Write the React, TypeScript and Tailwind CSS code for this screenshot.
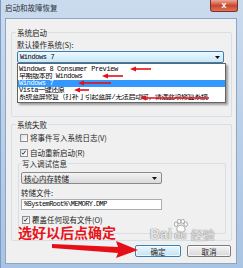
import React from 'react'

const sans = "font-['Noto_Sans_CJK_SC','Liberation_Sans',sans-serif]"
const mono = "font-['Liberation_Mono','Noto_Sans_CJK_SC',monospace]"

const bootItems = [
  'Windows 8 Consumer Preview',
  '早期版本的 Windows',
  'Windows 7',
  'Vista一键还原',
  '系统蓝屏修复（打补丁引起蓝屏/无法启动时，请选此项修复系统',
]

// red annotation arrows pointing left: [tail x, head x, y]
const marks: [number, number, number][] = [
  [150, 129, 69],
  [122, 101, 76],
  [110, 77, 83],
  [88, 73, 90],
  [208, 139, 98],
]

function Check({ checked }: { checked?: boolean }) {
  return (
    <span className="relative flex h-[8px] w-[8px] shrink-0 items-center justify-center border border-[#8f8f8f] bg-gradient-to-br from-[#dedede] to-white">
      {checked && (
        <svg viewBox="0 0 8 8" className="absolute left-0 top-0 h-[6px] w-[6px]">
          <path d="M1.2 3.8 L2.9 5.6 L6 1.2" fill="none" stroke="#1f3a70" strokeWidth="1.3" />
        </svg>
      )}
    </span>
  )
}

function Caret() {
  return (
    <svg viewBox="0 0 5 3" className="h-[3px] w-[5px]">
      <path d="M0 0 H5 L2.5 3 Z" fill="#111" />
    </svg>
  )
}

function GroupTitle({ children }: { children: React.ReactNode }) {
  return <div className="-mt-[5px] -ml-[1px] w-fit bg-[#f0f0f0] px-[1px] text-[7.5px] leading-[9px]">{children}</div>
}

function Watermark() {
  return (
    <div className="pointer-events-none absolute left-[144px] top-[200px] flex items-end text-white/80 [text-shadow:0_0_1px_#7a7a7a,0_0_1px_#7a7a7a]">
      <span className="font-['Liberation_Sans',sans-serif] text-[14px] font-bold leading-[14px]">Bai</span>
      <div className="flex flex-col items-center">
        <svg viewBox="0 0 18 16" className="h-[14px] w-[17px]">
          <g fill="rgba(255,255,255,0.85)" stroke="#8a8a8a" strokeWidth="0.8">
            <ellipse cx="4" cy="6" rx="2" ry="2.6" />
            <ellipse cx="7.5" cy="2.8" rx="2" ry="2.5" />
            <ellipse cx="11.5" cy="2.8" rx="2" ry="2.5" />
            <ellipse cx="15" cy="6" rx="2" ry="2.6" />
            <path d="M9.5 7 C6 7 4 11 5 13.5 C6 15.5 13 15.5 14 13.5 C15 11 13 7 9.5 7 Z" />
          </g>
        </svg>
        <span className="-mt-[2px] font-['Liberation_Sans',sans-serif] text-[10px] font-bold leading-[10px]">du</span>
      </div>
      <span className="ml-[2px] text-[12px] leading-[13px]">经验</span>
    </div>
  )
}

export default function App() {
  return (
    <div
      className={`relative flex h-[268px] w-[243px] flex-col overflow-hidden border-l border-[#7c9cc8] bg-gradient-to-b from-[#cbdbee] to-[#a9c3e2] text-[#1e1e1e] ${sans}`}
    >
      {/* title bar */}
      <div className="flex h-[18px] shrink-0 items-start justify-between">
        <span className="pl-[4px] pt-[3px] text-[7.5px] leading-[9px] text-[#2b3440]">启动和故障恢复</span>
        <div className="mr-[5px] flex h-[12px] w-[28px] items-center justify-center rounded-b-[3px] border border-t-0 border-[#7b3329] bg-gradient-to-b from-[#eaa796] via-[#c9462f] to-[#dc7358] font-['Liberation_Sans',sans-serif] text-[9px] font-bold leading-none text-white">
          x
        </div>
      </div>

      {/* dialog body */}
      <div className="relative mb-[4px] ml-[4px] mr-[6px] flex-1 border border-[#8ea6c4] bg-[#f0f0f0]">
        {/* 系统启动 */}
        <div className="relative ml-[5px] mt-[13px] h-[85px] w-[221px] rounded-[2px] border border-[#d5dfe5] pl-[5px]">
          <GroupTitle>系统启动</GroupTitle>
          <div className="mt-[3px] text-[7.5px] leading-[9px]">默认操作系统(S):</div>
          <div className="mt-[2px] flex h-[12px] w-[207px] items-center justify-between rounded-[2px] border border-[#3c7fb1] bg-gradient-to-b from-[#eef8fe] to-[#c6e8fb] pl-[2px] pr-[3px]">
            <span className={`${mono} text-[7px] leading-[9px] tracking-[-0.4px] text-black`}>Windows 7</span>
            <Caret />
          </div>
          <div className="absolute left-[5px] top-[30px] z-10 h-[40px] w-[209px] overflow-hidden border border-[#646464] bg-white pt-[2px] shadow-[2px_2px_2px_rgba(0,0,0,0.35)]">
            {bootItems.map((item, i) => (
              <div
                key={i}
                className={`${mono} h-[7px] overflow-hidden whitespace-nowrap pl-[1px] text-[7px] leading-[7px] tracking-[-0.4px] ${
                  i === 2 ? 'bg-[#3399ff] text-white' : 'text-black'
                }`}
              >
                {item}
              </div>
            ))}
          </div>
        </div>

        {/* 系统失败 */}
        <div className="ml-[5px] mt-[7px] h-[117px] w-[221px] rounded-[2px] border border-[#d5dfe5] pl-[5px]">
          <GroupTitle>系统失败</GroupTitle>
          <div className="ml-[3px] mt-[4px] flex h-[9px] items-center gap-[2px] text-[7.5px] leading-[9px]">
            <Check />
            <span>将事件写入系统日志(V)</span>
          </div>
          <div className="ml-[3px] mt-[6px] flex h-[9px] items-center gap-[2px] text-[7.5px] leading-[9px]">
            <Check checked />
            <span>自动重新启动(R)</span>
          </div>

          <div className="ml-[1px] mt-[6px] w-[208px] rounded-[2px] border border-[#d5dfe5] pb-[9px] pl-[2px]">
            <div className="-mt-[5px] w-fit bg-[#f0f0f0] px-[1px] text-[7.5px] leading-[9px]">写入调试信息</div>
            <div className="mt-[4px] flex h-[12px] w-[141px] items-center justify-between rounded-[2px] border border-[#8a8a8a] bg-gradient-to-b from-[#f4f4f4] to-[#dadada] pl-[2px] pr-[4px]">
              <span className="text-[7.5px] leading-[9px]">核心内存转储</span>
              <Caret />
            </div>
            <div className="mt-[4px] text-[7.5px] leading-[9px]">转储文件:</div>
            <div className="mt-[2px] flex h-[11px] w-[141px] items-center border border-[#abadb3] bg-white pl-[2px]">
              <span className={`${mono} text-[7px] leading-[9px] tracking-[-0.6px] text-black`}>%SystemRoot%\MEMORY.DMP</span>
            </div>
            <div className="ml-[1px] mt-[5px] flex h-[9px] items-center gap-[2px] text-[7.5px] leading-[9px]">
              <Check checked />
              <span>覆盖任何现有文件(O)</span>
            </div>
          </div>
        </div>

        {/* buttons */}
        <div className="mt-[4px] flex justify-end gap-[6px] pr-[5px]">
          <button className="flex h-[12px] w-[46px] items-center justify-center rounded-[2px] border border-[#3c7fb1] bg-gradient-to-b from-[#eaf6fd] to-[#bfe4f7] text-[7.5px] leading-[9px] shadow-[inset_0_0_0_1px_rgba(255,255,255,0.7)]">
            确定
          </button>
          <button className="flex h-[12px] w-[44px] items-center justify-center rounded-[2px] border border-[#7a7a7a] bg-gradient-to-b from-[#f4f4f4] to-[#d8d8d8] text-[7.5px] leading-[9px] shadow-[inset_0_0_0_1px_rgba(255,255,255,0.7)]">
            取消
          </button>
        </div>

        {/* annotation text */}
        <div className="absolute left-[12px] top-[206px] text-[14px] font-bold leading-[14px] text-[#e8141c]">选好以后点确定</div>
        <Watermark />
      </div>

      {/* red annotation arrows */}
      <svg viewBox="0 0 243 268" className="pointer-events-none absolute left-0 top-0 z-20 h-[268px] w-[243px]">
        {marks.map(([x1, x2, y], i) => (
          <g key={i}>
            <line x1={x1} y1={y} x2={x2 + 4} y2={y} stroke="#e60f18" strokeWidth="1.6" />
            <polygon points={`${x2},${y} ${x2 + 6},${y - 2.6} ${x2 + 6},${y + 2.6}`} fill="#e60f18" />
          </g>
        ))}
        <polygon points="51,244 117,247 115,241 137,250 115,258 117,253 51,248" fill="#e60f18" />
      </svg>
    </div>
  )
}
